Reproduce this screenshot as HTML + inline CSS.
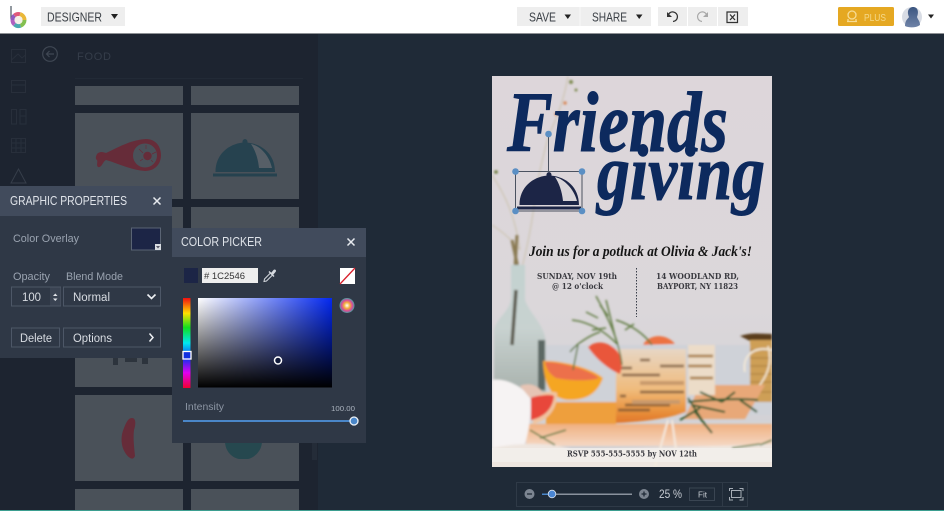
<!DOCTYPE html>
<html><head><meta charset="utf-8"><title>Designer</title>
<style>
html,body{margin:0;padding:0;width:944px;height:511px;overflow:hidden;background:#1f2a37}
svg{display:block}
text{font-family:"Liberation Sans",sans-serif}
.s{font-family:"DejaVu Serif","Liberation Serif",serif;font-weight:700;fill:#3a3a40}
.sc{font-family:"Liberation Serif",serif;font-style:italic;font-weight:700}
</style></head><body>
<svg width="944" height="511" viewBox="0 0 944 511" xmlns="http://www.w3.org/2000/svg">
<defs>
<clipPath id="fc"><rect x="492" y="76" width="280" height="391"/></clipPath>
<linearGradient id="hue" x1="0" y1="0" x2="0" y2="1"><stop offset="0" stop-color="#f01010"/><stop offset=".17" stop-color="#ffe000"/><stop offset=".33" stop-color="#10e020"/><stop offset=".5" stop-color="#00e8f0"/><stop offset=".67" stop-color="#1030f0"/><stop offset=".83" stop-color="#e000f0"/><stop offset="1" stop-color="#f00030"/></linearGradient>
<linearGradient id="pk1"><stop offset="0" stop-color="#fff"/><stop offset="1" stop-color="#0328f0"/></linearGradient>
<linearGradient id="pk2" x1="0" y1="0" x2="0" y2="1"><stop offset="0" stop-color="#000" stop-opacity="0"/><stop offset="1" stop-color="#000"/></linearGradient>
<linearGradient id="fbg" x1="0" y1="0" x2="0" y2="1"><stop offset="0" stop-color="#ddd6da"/><stop offset=".6" stop-color="#dbd7da"/><stop offset="1" stop-color="#cfd0d4"/></linearGradient>
<linearGradient id="tray" x1="0" y1="0" x2="0" y2="1"><stop offset="0" stop-color="#f0b080"/><stop offset="1" stop-color="#f5d8c4"/></linearGradient>
<linearGradient id="glass" x1="0" y1="0" x2="0" y2="1"><stop offset="0" stop-color="#e7d6c4"/><stop offset=".55" stop-color="#f0bb7c"/><stop offset=".85" stop-color="#e8903a"/><stop offset="1" stop-color="#e0742a"/></linearGradient>
<linearGradient id="bot" x1="0" y1="0" x2="0" y2="1"><stop offset="0" stop-color="#c3d2d0"/><stop offset=".5" stop-color="#c8d2d0"/><stop offset="1" stop-color="#a9b2ad"/></linearGradient>
<radialGradient id="wheel"><stop offset="0" stop-color="#fff"/><stop offset=".4" stop-color="#f2b03c"/><stop offset=".72" stop-color="#d84a9a"/><stop offset="1" stop-color="#4aa0a0"/></radialGradient>
<linearGradient id="ava" x1="0" y1="0" x2="0" y2="1"><stop offset="0" stop-color="#3c5680"/><stop offset="1" stop-color="#6f83a8"/></linearGradient>
<filter id="b1" x="-5%" y="-5%" width="110%" height="110%"><feGaussianBlur stdDeviation="1.1"/></filter>
<path id="cl" d="M519.5 205C519.5 187 533 177 546.5 175.6C546 171 552 171 551.5 175.6C566 177 579 187 579 205ZM517 206.5H581V209.5H517Z"/>
</defs>

<rect width="944" height="511" fill="#1f2a37"/>
<rect x="0" y="34" width="318" height="477" fill="#1d2430"/>
<rect x="0" y="0" width="944" height="33" fill="#fff"/>
<rect x="0" y="33" width="944" height="1" fill="#8d9094"/>

<!-- top bar -->
<path d="M11 6V19" stroke="#4a5560" stroke-width="1.2"/>
<g fill="none" stroke-width="4">
<path d="M12.500 20A6 6 0 0 1 14.500 15.500" stroke="#8f5cc0"/>
<path d="M14.500 15.500A6 6 0 0 1 20 14.200" stroke="#e05a7a"/>
<path d="M20 14.200A6 6 0 0 1 24.500 20" stroke="#eab838"/>
<path d="M24.500 20A6 6 0 0 1 20.500 25.700" stroke="#84c050"/>
<path d="M20.500 25.700A6 6 0 0 1 14.500 24.500" stroke="#4aa8b0"/>
<path d="M14.500 24.500A6 6 0 0 1 12.500 20" stroke="#b060c0"/>
</g>
<circle cx="18.500" cy="20" r="4" fill="#f4f0e8"/>
<rect x="41" y="7" width="84" height="19" fill="#eee"/>
<text x="47" y="21.500" font-size="13" fill="#3a3f45" textLength="55" lengthAdjust="spacingAndGlyphs">DESIGNER</text>
<path d="M111 14H118L114.500 19Z" fill="#222"/>
<rect x="517" y="7" width="134" height="19" fill="#eee"/>
<rect x="579.500" y="7" width="1" height="19" fill="#f8f8f8"/>
<text x="529" y="21.500" font-size="13" fill="#3a3f45" textLength="27" lengthAdjust="spacingAndGlyphs">SAVE</text>
<path d="M564.500 14.500H571L567.800 19Z" fill="#222"/>
<text x="592" y="21.500" font-size="13" fill="#3a3f45" textLength="35" lengthAdjust="spacingAndGlyphs">SHARE</text>
<path d="M636 14.500H642.500L639.200 19Z" fill="#222"/>
<rect x="658" y="7" width="29" height="19" fill="#eee"/>
<rect x="688" y="7" width="29" height="19" fill="#eee"/>
<rect x="718" y="7" width="30" height="19" fill="#eee"/>
<path d="M668 15.500A4.800 4.800 0 1 1 673 21.500" fill="none" stroke="#333" stroke-width="1.300"/>
<path d="M667 12V17H672Z" fill="#333"/>
<path d="M707 15.500A4.800 4.800 0 1 0 702 21.500" fill="none" stroke="#a8a8a8" stroke-width="1.200"/>
<path d="M708 12V17H703Z" fill="#a8a8a8"/>
<path d="M727 12H737.500V22.500H727Z" fill="none" stroke="#333" stroke-width="1.200"/>
<path d="M730 14.500L735 20M735 14.500L730 20" stroke="#333" stroke-width="1.300"/>
<rect x="838" y="7" width="56" height="19" rx="1.500" fill="#e5a822"/>
<circle cx="852" cy="15" r="4" fill="none" stroke="#f7dc95" stroke-width="1.300"/>
<path d="M847 21.500H857M848 19V22M856 19V22" stroke="#f7dc95" stroke-width="1.300"/>
<text x="864" y="21" font-size="10" fill="#f5d98a" textLength="22" lengthAdjust="spacingAndGlyphs">PLUS</text>
<circle cx="912" cy="17" r="10" fill="#d8dce4"/>
<path d="M905 26C905 20 908 19 909 17C906 10 910 7 913 7C918 7 919 12 917 17C918 20 920 21 920 25C916 28 909 28 905 26Z" fill="url(#ava)"/>
<path d="M928 14.500H934L931 18.500Z" fill="#222"/>

<!-- left rail -->
<g fill="none" stroke="#282f3b" stroke-width="1">
<path d="M11.500 49.500H25.500V62.500H11.500ZM11.500 60L18 54L22 58L25.500 55"/>
<path d="M11.500 80.500H25.500V92.500H11.500ZM11.500 85H25.500"/>
<path d="M11.500 109.500H16.500V124H11.500ZM20 109.500H26V124H20ZM20 116H26"/>
<path d="M11.500 138.500H25.500V152.500H11.500ZM16 138.500V152.500M21 138.500V152.500M11.500 143H25.500M11.500 148H25.500"/>
<path d="M18.500 169L26 183H11Z" stroke="#363e4a"/>
</g>
<circle cx="50" cy="54" r="7.300" fill="none" stroke="#3f4753" stroke-width="1.200"/>
<path d="M54 54H46.500M49.500 51L46.500 54L49.500 57" fill="none" stroke="#3f4753" stroke-width="1.200"/>
<text x="77" y="60" font-size="11" fill="#353d4a" textLength="34">FOOD</text>
<rect x="75" y="78" width="228" height="1" fill="#222a36"/>

<!-- cards -->
<g fill="#4a5159">
<rect x="75" y="86" width="108" height="19"/><rect x="191" y="86" width="108" height="19"/>
<rect x="75" y="113" width="108" height="86"/><rect x="191" y="113" width="108" height="86"/>
<rect x="75" y="207" width="108" height="86"/><rect x="191" y="207" width="108" height="86"/>
<rect x="75" y="301" width="108" height="86"/><rect x="191" y="301" width="108" height="86"/>
<rect x="75" y="395" width="108" height="86"/><rect x="191" y="395" width="108" height="86"/>
<rect x="75" y="489" width="108" height="22"/><rect x="191" y="489" width="108" height="22"/>
</g>
<rect x="312" y="330" width="5" height="130" fill="#242c38"/>
<path d="M97 154C100 151 103 152 106 153C117 148 130 140 146 139C156 139 161 147 161 155C161 164 155 171 145 171C131 170 117 163 106 160C103 161 102 168 98 167C96 165 98 162 97 160C95 159 96 156 97 154Z" fill="#662c39"/>
<circle cx="145" cy="155.500" r="12" fill="#4a5159"/>
<circle cx="147.500" cy="156" r="4.200" fill="#662c39"/>
<path d="M146 145V149M139 149L143 153M156 152L152 154M140 161L143 159M153 162L151 160" stroke="#662c39" stroke-width=".7"/>
<use href="#cl" transform="translate(-304 -33)" fill="#26424f"/>
<path d="M251 144C260 146 269 155 272 168H259C258 158 255 150 251 144Z" fill="#575f67"/>
<path d="M113 356H118V365H113ZM125 356H137V362H125ZM142 356H148V364H142Z" fill="#2d343d"/>
<path d="M132 418C136 418 136 424 134 430C133 438 134 446 135 456C133 461 129 458 126 454C121 447 120 437 124 428C126 423 128 418 132 418Z" fill="#662c39"/>
<path d="M225 441H262C262 452 253 458 248 459H239C233 458 225 452 225 441Z" fill="#26484f"/>

<!-- flyer -->
<rect x="492" y="76" width="280" height="391" fill="url(#fbg)"/>
<g clip-path="url(#fc)"><g filter="url(#b1)">
<!-- branches -->
<path d="M568 76C564 100 556 120 550 132C545 146 540 170 536 190C533 215 530 240 516 290M492 175C505 195 515 215 520 250M492 225C503 232 512 240 520 250" fill="none" stroke="#c9bfa6" stroke-width="1.300" opacity=".7"/>
<circle cx="571" cy="82" r="2" fill="#7d8a50"/><circle cx="565" cy="103" r="1.800" fill="#d98a5a"/><circle cx="576" cy="90" r="1.500" fill="#7d8a50"/><circle cx="496" cy="172" r="1.800" fill="#6a7a3a"/><circle cx="556" cy="114" r="1.600" fill="#d98a5a"/>
<path d="M512 240L518 268M517 235L514 285" stroke="#8a7a52" stroke-width="3"/>
<!-- bottle -->
<path d="M511 265H525V300C530 315 546 325 546 345V392H494V330C496 318 510 312 511 298Z" fill="url(#bot)"/>
<path d="M516 290L512 345" stroke="#5c5a4e" stroke-width="3.500"/>
<rect x="538" y="340" width="7" height="50" fill="#5c6864"/>
<!-- backdrop lower -->
<rect x="546" y="345" width="226" height="70" fill="#cfd2d8"/>
<!-- spool -->
<path d="M740 336C752 332 762 334 772 334V341H750Z" fill="#5a3c1e"/>
<rect x="750" y="340" width="22" height="62" fill="#ce9f57"/>
<path d="M750 350H772M750 358H772M750 366H772M750 374H772M750 382H772M750 392H772" stroke="#a97d3a" stroke-width="1"/>
<path d="M772 350C750 345 742 360 745 372" fill="none" stroke="#f1e7d7" stroke-width="2"/>
<path d="M768 346C775 370 760 385 750 397" fill="none" stroke="#f0e0c8" stroke-width="2"/>
<!-- tray -->
<path d="M526 424H772V446H526Z" fill="url(#tray)"/>
<path d="M546 402H616V424H546Z" fill="#ee9f3c"/>
<path d="M700 385H765L745 419H684Z" fill="#e8a878"/>
<!-- orange half -->
<path d="M543 361C560 360 592 368 603 378C598 392 588 400 570 400C552 400 544 386 543 361Z" fill="#f5a623"/>
<path d="M545 362C562 362 590 370 599 378C588 382 566 380 556 378C549 374 546 368 545 362Z" fill="#ec6f4c"/>
<!-- slice -->
<path d="M533 394C545 392 555 391 557 393C558 408 548 421 533 424Z" fill="#f0c4a0"/>
<path d="M531 397C543 395 552 394 554 396C553 408 545 417 531 420Z" fill="#e8463a"/>
<!-- cloth -->
<path d="M492 380C505 378 520 385 530 396C532 415 528 440 522 450H492Z" fill="#f6f3f3"/>
<path d="M520 386C530 382 540 386 543 394L530 398Z" fill="#e6c4b4"/>
<!-- glass -->
<path d="M688 345H715V395H688Z" fill="#ecdcc8"/>
<path d="M688 356H713M688 366H712M690 378H713" stroke="#b08a58" stroke-width="3"/>
<path d="M616 349H686V412C665 420 635 422 616 423Z" fill="url(#glass)"/>
<path d="M618 368H632M640 360H650M660 366H684M622 375H660M640 392H684M620 396H626M625 405H670M618 410H650" stroke="#6d4c30" stroke-width="3" opacity=".65"/>
<path d="M640 383H684M632 402H680" stroke="#c99a6c" stroke-width="4"/>
<!-- red slice on glass -->
<path d="M588 347C597 340 606 342 614 348C624 356 622 368 620 374C609 370 595 358 588 347Z" fill="#e9573a"/>
<path d="M643 345C648 335 665 332 675 344Z" fill="#ed7242"/>
<!-- rosemary -->
<g stroke="#5f7a40" stroke-width="1.500" fill="none">
<path d="M596 296C606 315 618 335 622 365M572 320C590 322 606 332 618 345M606 300C610 315 612 325 616 340M616 320C632 325 645 335 652 345M570 352C575 345 590 335 600 332M573 370L578 345"/>
<path d="M586 312L598 318M592 330L606 328M600 305L608 316M625 330L634 324"/>
</g>
<g stroke="#2e5a2e" stroke-width="2" fill="none">
<path d="M688 402C705 400 735 398 758 400M692 405L725 412M688 398L705 425M700 392L722 402M735 392L722 402M740 400L757 412M695 412L712 433M680 420L700 408"/>
</g>
<path d="M485 450C520 440 560 444 572 450L780 444V475H485Z" fill="#eee6e0"/>
<path d="M530 430L555 445M540 438L566 430M732 448L760 444M760 445L772 440" stroke="#5c7c40" stroke-width="1.500"/>
<path d="M668 420L655 467M672 420L676 450" stroke="#f4eadf" stroke-width="2"/>
</g></g>
<rect x="492" y="448" width="280" height="14" fill="#f3f0ee" opacity=".75"/>

<!-- flyer text -->
<text class="sc" x="507" y="151" font-size="86" fill="#0d2a5e" stroke="#0d2a5e" stroke-width="1" textLength="221" lengthAdjust="spacingAndGlyphs">Friends</text>
<text class="sc" x="597" y="199" font-size="78" fill="#0d2a5e" stroke="#0d2a5e" stroke-width="1" textLength="168" lengthAdjust="spacingAndGlyphs">giving</text>
<text class="sc" x="529" y="256" font-size="15" fill="#151515" textLength="223" lengthAdjust="spacingAndGlyphs">Join us for a potluck at Olivia &amp; Jack's!</text>
<text class="s" x="537" y="279" font-size="8.500" textLength="80" lengthAdjust="spacingAndGlyphs">SUNDAY, NOV 19th</text>
<text class="s" x="552" y="289" font-size="8.500" textLength="51" lengthAdjust="spacingAndGlyphs">@ 12 o'clock</text>
<text class="s" x="656" y="279" font-size="8.500" textLength="83" lengthAdjust="spacingAndGlyphs">14 WOODLAND RD,</text>
<text class="s" x="657" y="289" font-size="8.500" textLength="81" lengthAdjust="spacingAndGlyphs">BAYPORT, NY 11823</text>
<path d="M636.500 268V317" stroke="#3a3f4a" stroke-width="1" stroke-dasharray="1.500 1.500"/>
<text class="s" x="567" y="456.500" font-size="8.500" fill="#2c2c30" textLength="130" lengthAdjust="spacingAndGlyphs">RSVP 555-555-5555 by NOV 12th</text>

<!-- selected cloche -->
<path d="M515.500 171.500H582V211H515.500ZM548.500 134V171.500" fill="none" stroke="#4b5260" stroke-width="1"/>
<use href="#cl" fill="#1c2546"/>
<path d="M555 177C564 179 574 189 577 201H563C562 191 559 183 555 177Z" fill="#d9d5d8"/>
<g fill="#5b8fc4"><circle cx="515.500" cy="171.500" r="3.300"/><circle cx="582" cy="171.500" r="3.300"/><circle cx="515.500" cy="211" r="3.300"/><circle cx="582" cy="211" r="3.300"/><circle cx="548.500" cy="134" r="3.300"/></g>

<!-- graphic properties panel -->
<rect x="0" y="186" width="172" height="172" fill="#2f3846"/>
<rect x="0" y="186" width="172" height="30" fill="#414b5c"/>
<text x="10" y="205" font-size="12.500" fill="#dfe3e9" textLength="117" lengthAdjust="spacingAndGlyphs">GRAPHIC PROPERTIES</text>
<path d="M153.500 197.500L160.500 204.500M160.500 197.500L153.500 204.500" stroke="#e6e9ee" stroke-width="1.500"/>
<text x="13" y="242" font-size="11" fill="#9aa3b0" textLength="66" lengthAdjust="spacingAndGlyphs">Color Overlay</text>
<rect x="131.500" y="228" width="29" height="22" fill="#1c2546" stroke="#5a6474"/>
<rect x="155" y="244" width="6" height="6" fill="#d8dce2"/><path d="M156 246H160L158 248.500Z" fill="#556"/>
<text x="13" y="280" font-size="11" fill="#9aa3b0" textLength="37" lengthAdjust="spacingAndGlyphs">Opacity</text>
<text x="66" y="280" font-size="11" fill="#9aa3b0" textLength="57" lengthAdjust="spacingAndGlyphs">Blend Mode</text>
<rect x="11.500" y="287" width="49" height="19" fill="none" stroke="#4d5767"/>
<rect x="50" y="287.500" width="10.500" height="18" fill="#3a4352"/>
<path d="M53 296L55.300 293.500L57.500 296ZM53 298.500L55.300 301L57.500 298.500Z" fill="#e0e3e8"/>
<text x="22" y="301" font-size="11.500" fill="#d8dce2" textLength="19" lengthAdjust="spacingAndGlyphs">100</text>
<rect x="63.500" y="287" width="97" height="19" fill="none" stroke="#4d5767"/>
<text x="73" y="301" font-size="11.500" fill="#d8dce2" textLength="37" lengthAdjust="spacingAndGlyphs">Normal</text>
<path d="M147.500 294.500L151.500 298.500L155.500 294.500" fill="none" stroke="#eef0f3" stroke-width="1.600"/>
<rect x="11.500" y="328" width="48" height="19" fill="none" stroke="#4d5767"/>
<text x="20" y="342" font-size="11.500" fill="#d8dce2" textLength="32" lengthAdjust="spacingAndGlyphs">Delete</text>
<rect x="63.500" y="328" width="97" height="19" fill="none" stroke="#4d5767"/>
<text x="73" y="342" font-size="11.500" fill="#d8dce2" textLength="39" lengthAdjust="spacingAndGlyphs">Options</text>
<path d="M149.500 333.500L153 337.500L149.500 341.500" fill="none" stroke="#eef0f3" stroke-width="1.500"/>

<!-- color picker panel -->
<rect x="172" y="228" width="194" height="215" fill="#2f3846"/>
<rect x="172" y="228" width="194" height="29" fill="#414b5c"/>
<text x="181" y="246" font-size="12.500" fill="#dfe3e9" textLength="81" lengthAdjust="spacingAndGlyphs">COLOR PICKER</text>
<path d="M347.500 238.500L354.500 245.500M354.500 238.500L347.500 245.500" stroke="#e6e9ee" stroke-width="1.500"/>
<rect x="184" y="268" width="14" height="15" fill="#1c2546"/>
<rect x="202" y="268" width="56" height="15" fill="#eeeeee"/>
<text x="204" y="279" font-size="9.500" fill="#333" textLength="41" lengthAdjust="spacingAndGlyphs"># 1C2546</text>
<path d="M264 281.500L264.500 279L270.500 273L272.500 275L266.500 281Z" fill="none" stroke="#d5d9df" stroke-width="1"/>
<path d="M269 271.500L274 276.500" stroke="#d5d9df" stroke-width="1.400"/>
<path d="M271 273L273.500 270C275 268.500 277 270.500 275.500 272L273 275Z" fill="#d5d9df"/>
<rect x="340" y="268" width="15" height="16" fill="#fff"/>
<path d="M340 284L355 268" stroke="#d81e2a" stroke-width="1.300"/>
<rect x="183" y="298" width="7.500" height="90" fill="url(#hue)"/>
<rect x="183" y="351.500" width="8" height="7.500" fill="#1030e0" stroke="#fff" stroke-width="1.300"/>
<rect x="198" y="298" width="134" height="89.500" fill="url(#pk1)"/>
<rect x="198" y="298" width="134" height="89.500" fill="url(#pk2)"/>
<circle cx="278" cy="360.500" r="3.500" fill="#111a3a" stroke="#fff" stroke-width="1.500"/>
<circle cx="347" cy="305.500" r="7.500" fill="url(#wheel)"/>
<text x="185" y="410" font-size="10.500" fill="#8c95a3" textLength="39" lengthAdjust="spacingAndGlyphs">Intensity</text>
<text x="331" y="411" font-size="7.500" fill="#aab2bd" textLength="24" lengthAdjust="spacingAndGlyphs">100.00</text>
<rect x="183" y="420" width="171" height="2" fill="#4a86c8"/>
<circle cx="354" cy="421" r="4" fill="#4a86c8" stroke="#eef3f8" stroke-width="1.300"/>

<!-- zoom bar -->
<rect x="516.500" y="482.500" width="231" height="24" fill="none" stroke="#2f3a47"/>
<rect x="722" y="482" width="1" height="24" fill="#2f3a47"/>
<circle cx="529.500" cy="494" r="5" fill="#7c8591"/><path d="M527 494H532" stroke="#1f2a37" stroke-width="1.300"/>
<rect x="542" y="493.500" width="90" height="1.500" fill="#8a929d"/>
<rect x="542" y="493.500" width="10" height="1.500" fill="#4a86c8"/>
<circle cx="552" cy="494" r="3.800" fill="#4a86d4" stroke="#d9e3ee" stroke-width=".8"/>
<circle cx="644" cy="494" r="5" fill="#7c8591"/><path d="M641.500 494H646.500M644 491.500V496.500" stroke="#1f2a37" stroke-width="1.300"/>
<text x="659" y="498" font-size="12" fill="#c7ccd3" textLength="23" lengthAdjust="spacingAndGlyphs">25 %</text>
<rect x="689.500" y="488" width="25" height="12.500" fill="none" stroke="#3a4552"/>
<text x="698" y="497.500" font-size="8.500" fill="#c7ccd3" textLength="9" lengthAdjust="spacingAndGlyphs">Fit</text>
<path d="M729.500 491V488.500H733M739.500 488.500H743V491M743 497V500H739.500M733 500H729.500V497M731.500 490.500H741V497.500H731.500Z" fill="none" stroke="#a6adb6" stroke-width="1"/>
<rect x="0" y="510" width="944" height="1" fill="#3b9e90"/>
</svg>
</body></html>
